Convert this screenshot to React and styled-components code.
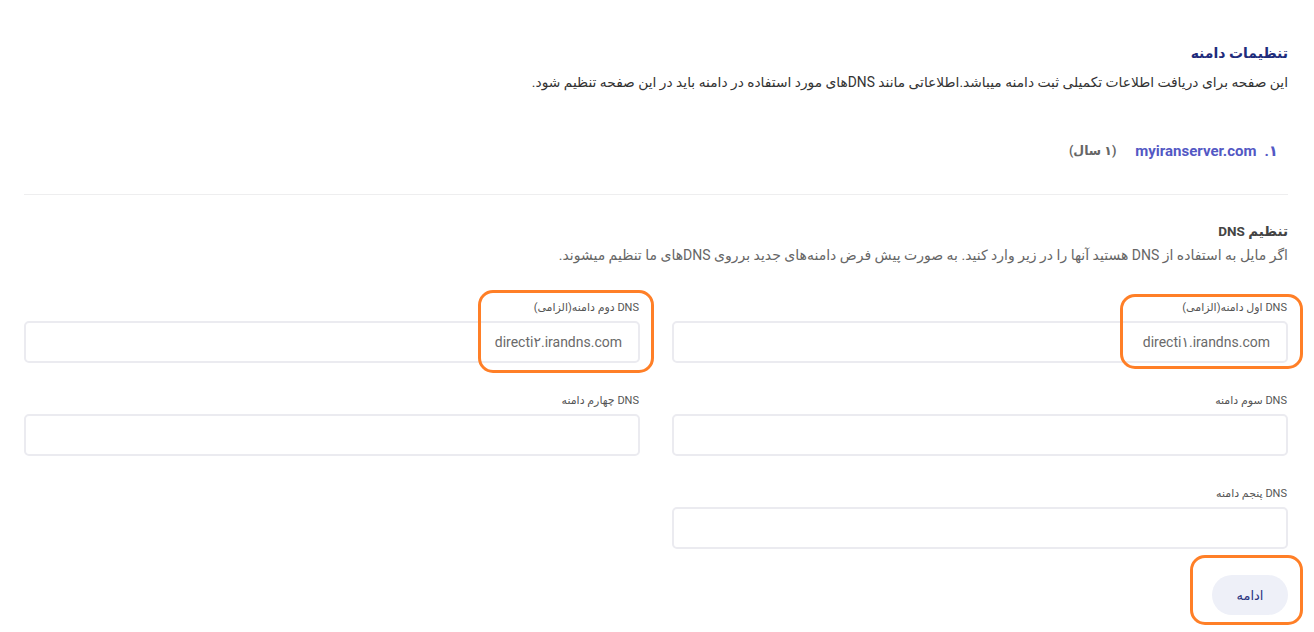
import styled, { createGlobalStyle } from "styled-components";

const GlobalStyle = createGlobalStyle`
  body {
    margin: 0;
    background: #ffffff;
    font-family: Roboto, "DejaVu Sans", sans-serif;
  }
`;

const Page = styled.div`
  direction: rtl;
  padding: 44px 26px 0 24px;
  box-sizing: border-box;
  width: 1314px;
`;

const Title = styled.h1`
  margin: 0;
  font-size: 14px;
  font-weight: bold;
  color: #1f2c7c;
  line-height: 18px;
`;

const Desc = styled.p`
  margin: 11px 0 0;
  font-size: 13.8px;
  color: #333333;
  line-height: 18px;
`;

const DomainRow = styled.div`
  display: flex;
  align-items: center;
  gap: 8px;
  margin-top: 51px;
  padding-right: 10px;
  font-size: 15px;
  font-weight: bold;
  line-height: 18px;
`;

const Num = styled.span`
  color: #5358c4;
`;

const DomainName = styled.span`
  color: #5358c4;
  margin-left: 11px;
`;

const Period = styled.span`
  color: #666666;
  font-size: 12.5px;
`;

const Divider = styled.hr`
  border: none;
  border-top: 1px solid #eeeeef;
  margin: 34px 0 0;
`;

const SectionTitle = styled.h2`
  margin: 27px 0 0;
  font-size: 13.5px;
  font-weight: bold;
  color: #444444;
  line-height: 18px;
`;

const SectionDesc = styled.p`
  margin: 7px 0 0;
  font-size: 14px;
  color: #666666;
  line-height: 17px;
`;

const Grid = styled.div`
  display: grid;
  grid-template-columns: 1fr 1fr;
  column-gap: 32px;
  row-gap: 31px;
  margin-top: 37px;
`;

const Field = styled.div`
  position: relative;
  display: flex;
  flex-direction: column;
`;

const Label = styled.label`
  font-size: 11px;
  color: #555555;
  line-height: 14px;
  margin-bottom: 6px;
  padding-right: 1px;
`;

const Input = styled.div`
  height: 42px;
  flex: none;
  box-sizing: border-box;
  border: 2px solid #ebebf0;
  border-radius: 5px;
  display: flex;
  align-items: center;
  padding: 0 16px;
  font-size: 14px;
  color: #6a6a6a;
  direction: ltr;
  justify-content: flex-end;
`;

const Actions = styled.div`
  grid-column: 1;
  display: flex;
  justify-content: flex-start;
  margin-top: -5px;
  padding-bottom: 20px;
`;

const ButtonWrap = styled.div`
  position: relative;
  display: flex;
`;

const Button = styled.button`
  width: 76px;
  height: 40px;
  border: none;
  border-radius: 20px;
  background: #eef0f8;
  color: #2b3480;
  font-family: Roboto, "DejaVu Sans", sans-serif;
  font-size: 13px;
  cursor: pointer;
`;

const Highlight = styled.div`
  position: absolute;
  top: ${(p) => p.t}px;
  bottom: ${(p) => p.b}px;
  right: ${(p) => p.r}px;
  width: ${(p) => p.w}px;
  border: 3px solid #ff7f27;
  border-radius: 15px;
  pointer-events: none;
  box-sizing: border-box;
`;

const fields = [
  { label: "DNS اول دامنه(الزامی)", value: "directi۱.irandns.com", mark: { t: -7, b: -6, r: -15, w: 183 } },
  { label: "DNS دوم دامنه(الزامی)", value: "directi۲.irandns.com", mark: { t: -11, b: -10, r: -14, w: 176 } },
  { label: "DNS سوم دامنه" },
  { label: "DNS چهارم دامنه" },
  { label: "DNS پنجم دامنه" },
];

export default function App() {
  return (
    <>
      <GlobalStyle />
      <Page>
        <Title>تنظیمات دامنه</Title>
        <Desc>
          این صفحه برای دریافت اطلاعات تکمیلی ثبت دامنه میباشد.اطلاعاتی مانند DNSهای مورد استفاده در دامنه باید در این صفحه تنظیم شود.
        </Desc>
        <DomainRow>
          <Num>۱.</Num>
          <DomainName>myiranserver.com</DomainName>
          <Period>(۱ سال)</Period>
        </DomainRow>
        <Divider />
        <SectionTitle>تنظیم DNS</SectionTitle>
        <SectionDesc>
          اگر مایل به استفاده از DNS هستید آنها را در زیر وارد کنید. به صورت پیش فرض دامنه‌های جدید برروی DNSهای ما تنظیم میشوند.
        </SectionDesc>
        <Grid>
          {fields.map((f) => (
            <Field key={f.label}>
              <Label>{f.label}</Label>
              <Input>{f.value}</Input>
              {f.mark && <Highlight {...f.mark} />}
            </Field>
          ))}
          <Actions>
            <ButtonWrap>
              <Button>ادامه</Button>
              <Highlight t={-20} b={-10} r={-15} w={113} />
            </ButtonWrap>
          </Actions>
        </Grid>
      </Page>
    </>
  );
}
